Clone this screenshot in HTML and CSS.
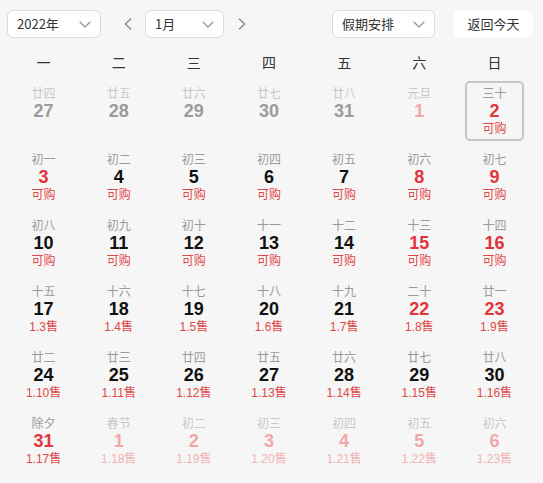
FILE: index.html
```html
<!DOCTYPE html>
<html lang="zh-CN">
<head>
<meta charset="utf-8">
<link rel="stylesheet" href="styles.css">
</head>
<body>
<div class="toolbar">
  <div class="select sel-year"><span>2022年</span><svg class="chev" viewBox="0 0 12 7"><path d="M0.7 0.7 L6 6 L11.3 0.7"/></svg></div>
  <svg class="arrow arrow-prev" viewBox="0 0 8 12"><path d="M7 0.7 L1.3 6 L7 11.3"/></svg>
  <div class="select sel-month"><span>1月</span><svg class="chev" viewBox="0 0 12 7"><path d="M0.7 0.7 L6 6 L11.3 0.7"/></svg></div>
  <svg class="arrow arrow-next" viewBox="0 0 8 12"><path d="M1 0.7 L6.7 6 L1 11.3"/></svg>
  <div class="select sel-holiday"><span>假期安排</span><svg class="chev" viewBox="0 0 12 7"><path d="M0.7 0.7 L6 6 L11.3 0.7"/></svg></div>
  <div class="btn-today">返回今天</div>
</div>
<div class="calendar">
  <div class="week">
    <div>一</div><div>二</div><div>三</div><div>四</div><div>五</div><div>六</div><div>日</div>
  </div>
  <div class="days">
    <div class="cell prev"><div class="day"><div class="lunar">廿四</div><div class="num">27</div><div class="sub"></div></div></div>
    <div class="cell prev"><div class="day"><div class="lunar">廿五</div><div class="num">28</div><div class="sub"></div></div></div>
    <div class="cell prev"><div class="day"><div class="lunar">廿六</div><div class="num">29</div><div class="sub"></div></div></div>
    <div class="cell prev"><div class="day"><div class="lunar">廿七</div><div class="num">30</div><div class="sub"></div></div></div>
    <div class="cell prev"><div class="day"><div class="lunar">廿八</div><div class="num">31</div><div class="sub"></div></div></div>
    <div class="cell past red"><div class="day"><div class="lunar">元旦</div><div class="num">1</div><div class="sub"></div></div></div>
    <div class="cell today red"><div class="day"><div class="lunar">三十</div><div class="num">2</div><div class="sub">可购</div></div></div>

    <div class="cell red"><div class="day"><div class="lunar">初一</div><div class="num">3</div><div class="sub">可购</div></div></div>
    <div class="cell"><div class="day"><div class="lunar">初二</div><div class="num">4</div><div class="sub">可购</div></div></div>
    <div class="cell"><div class="day"><div class="lunar">初三</div><div class="num">5</div><div class="sub">可购</div></div></div>
    <div class="cell"><div class="day"><div class="lunar">初四</div><div class="num">6</div><div class="sub">可购</div></div></div>
    <div class="cell"><div class="day"><div class="lunar">初五</div><div class="num">7</div><div class="sub">可购</div></div></div>
    <div class="cell red"><div class="day"><div class="lunar">初六</div><div class="num">8</div><div class="sub">可购</div></div></div>
    <div class="cell red"><div class="day"><div class="lunar">初七</div><div class="num">9</div><div class="sub">可购</div></div></div>

    <div class="cell"><div class="day"><div class="lunar">初八</div><div class="num">10</div><div class="sub">可购</div></div></div>
    <div class="cell"><div class="day"><div class="lunar">初九</div><div class="num">11</div><div class="sub">可购</div></div></div>
    <div class="cell"><div class="day"><div class="lunar">初十</div><div class="num">12</div><div class="sub">可购</div></div></div>
    <div class="cell"><div class="day"><div class="lunar">十一</div><div class="num">13</div><div class="sub">可购</div></div></div>
    <div class="cell"><div class="day"><div class="lunar">十二</div><div class="num">14</div><div class="sub">可购</div></div></div>
    <div class="cell red"><div class="day"><div class="lunar">十三</div><div class="num">15</div><div class="sub">可购</div></div></div>
    <div class="cell red"><div class="day"><div class="lunar">十四</div><div class="num">16</div><div class="sub">可购</div></div></div>

    <div class="cell"><div class="day"><div class="lunar">十五</div><div class="num">17</div><div class="sub">1.3售</div></div></div>
    <div class="cell"><div class="day"><div class="lunar">十六</div><div class="num">18</div><div class="sub">1.4售</div></div></div>
    <div class="cell"><div class="day"><div class="lunar">十七</div><div class="num">19</div><div class="sub">1.5售</div></div></div>
    <div class="cell"><div class="day"><div class="lunar">十八</div><div class="num">20</div><div class="sub">1.6售</div></div></div>
    <div class="cell"><div class="day"><div class="lunar">十九</div><div class="num">21</div><div class="sub">1.7售</div></div></div>
    <div class="cell red"><div class="day"><div class="lunar">二十</div><div class="num">22</div><div class="sub">1.8售</div></div></div>
    <div class="cell red"><div class="day"><div class="lunar">廿一</div><div class="num">23</div><div class="sub">1.9售</div></div></div>

    <div class="cell"><div class="day"><div class="lunar">廿二</div><div class="num">24</div><div class="sub">1.10售</div></div></div>
    <div class="cell"><div class="day"><div class="lunar">廿三</div><div class="num">25</div><div class="sub">1.11售</div></div></div>
    <div class="cell"><div class="day"><div class="lunar">廿四</div><div class="num">26</div><div class="sub">1.12售</div></div></div>
    <div class="cell"><div class="day"><div class="lunar">廿五</div><div class="num">27</div><div class="sub">1.13售</div></div></div>
    <div class="cell"><div class="day"><div class="lunar">廿六</div><div class="num">28</div><div class="sub">1.14售</div></div></div>
    <div class="cell"><div class="day"><div class="lunar">廿七</div><div class="num">29</div><div class="sub">1.15售</div></div></div>
    <div class="cell"><div class="day"><div class="lunar">廿八</div><div class="num">30</div><div class="sub">1.16售</div></div></div>

    <div class="cell red"><div class="day"><div class="lunar">除夕</div><div class="num">31</div><div class="sub">1.17售</div></div></div>
    <div class="cell next"><div class="day"><div class="lunar">春节</div><div class="num">1</div><div class="sub">1.18售</div></div></div>
    <div class="cell next"><div class="day"><div class="lunar">初二</div><div class="num">2</div><div class="sub">1.19售</div></div></div>
    <div class="cell next"><div class="day"><div class="lunar">初三</div><div class="num">3</div><div class="sub">1.20售</div></div></div>
    <div class="cell next"><div class="day"><div class="lunar">初四</div><div class="num">4</div><div class="sub">1.21售</div></div></div>
    <div class="cell next"><div class="day"><div class="lunar">初五</div><div class="num">5</div><div class="sub">1.22售</div></div></div>
    <div class="cell next"><div class="day"><div class="lunar">初六</div><div class="num">6</div><div class="sub">1.23售</div></div></div>
  </div>
</div>
</body>
</html>
```
FILE: styles.css
```css
html, body {
  margin: 0;
  padding: 0;
  background: #f6f6f6;
  font-family: "Liberation Sans", "Noto Sans CJK SC", sans-serif;
  color: #333;
}

.toolbar {
  display: flex;
  align-items: center;
  padding: 10px 10px 0 7px;
  height: 28px;
}

.select {
  box-sizing: border-box;
  height: 28px;
  background: #fff;
  border: 1px solid #dcdcdc;
  border-radius: 6px;
  display: flex;
  align-items: center;
  justify-content: space-between;
  padding: 0 9px 0 9px;
  font-size: 13px;
  color: #333;
}

.select span {
  font-family: "Noto Sans CJK SC", sans-serif;
  line-height: 28px;
}

.sel-year { width: 94px; }
.sel-month { width: 79px; }
.sel-holiday { width: 103px; margin-left: auto; }

.chev {
  width: 12px;
  height: 7px;
  fill: none;
  stroke: #9a9a9a;
  stroke-width: 1.3;
}

.arrow {
  width: 8px;
  height: 12px;
  fill: none;
  stroke: #8a8a8a;
  stroke-width: 1.4;
}

.arrow-prev { margin: 0 13px 0 23px; }
.arrow-next { margin-left: 14px; }

.btn-today {
  box-sizing: border-box;
  width: 79px;
  height: 28px;
  margin-left: 19px;
  background: #fff;
  border-radius: 6px;
  font-family: "Noto Sans CJK SC", sans-serif;
  font-size: 13px;
  line-height: 28px;
  text-align: center;
  color: #333;
}

.calendar {
  padding: 0 11px 0 6px;
}

.week {
  display: grid;
  grid-template-columns: repeat(7, 1fr);
  height: 40px;
  box-sizing: border-box;
  padding-top: 14px;
  font-family: "Noto Sans CJK SC", sans-serif;
  font-size: 14px;
  line-height: 20px;
  text-align: center;
  color: #333;
}

.days {
  display: grid;
  grid-template-columns: repeat(7, 1fr);
  grid-auto-rows: 66px;
}

.cell {
  display: flex;
  align-items: center;
  justify-content: center;
}

.day {
  box-sizing: border-box;
  width: 59px;
  height: 60px;
  padding: 1px 0;
  border: 2px solid transparent;
  border-radius: 5px;
  text-align: center;
}

.today .day {
  border-color: #c6c6c6;
}

.lunar {
  font-family: "Noto Sans CJK SC", sans-serif;
  font-size: 12px;
  line-height: 18px;
  height: 18px;
  color: #9a9a9a;
}

.num {
  font-family: "Liberation Sans", sans-serif;
  font-weight: bold;
  font-size: 18px;
  line-height: 18px;
  height: 18px;
  color: #111;
}

.sub {
  font-family: "Liberation Sans", "Noto Sans CJK SC", sans-serif;
  font-size: 12px;
  line-height: 18px;
  height: 18px;
  color: #e04848;
}

.red .num { color: #e2353b; }

.prev .lunar { color: #c8c8c8; }
.prev .num { color: #9b9b9b; }

.past .lunar { color: #c8c8c8; }
.past .num { color: #f1a7aa; }

.next .lunar { color: #c8c8c8; }
.next .num { color: #f1a7aa; }
.next .sub { color: #f2b3b5; }
```
